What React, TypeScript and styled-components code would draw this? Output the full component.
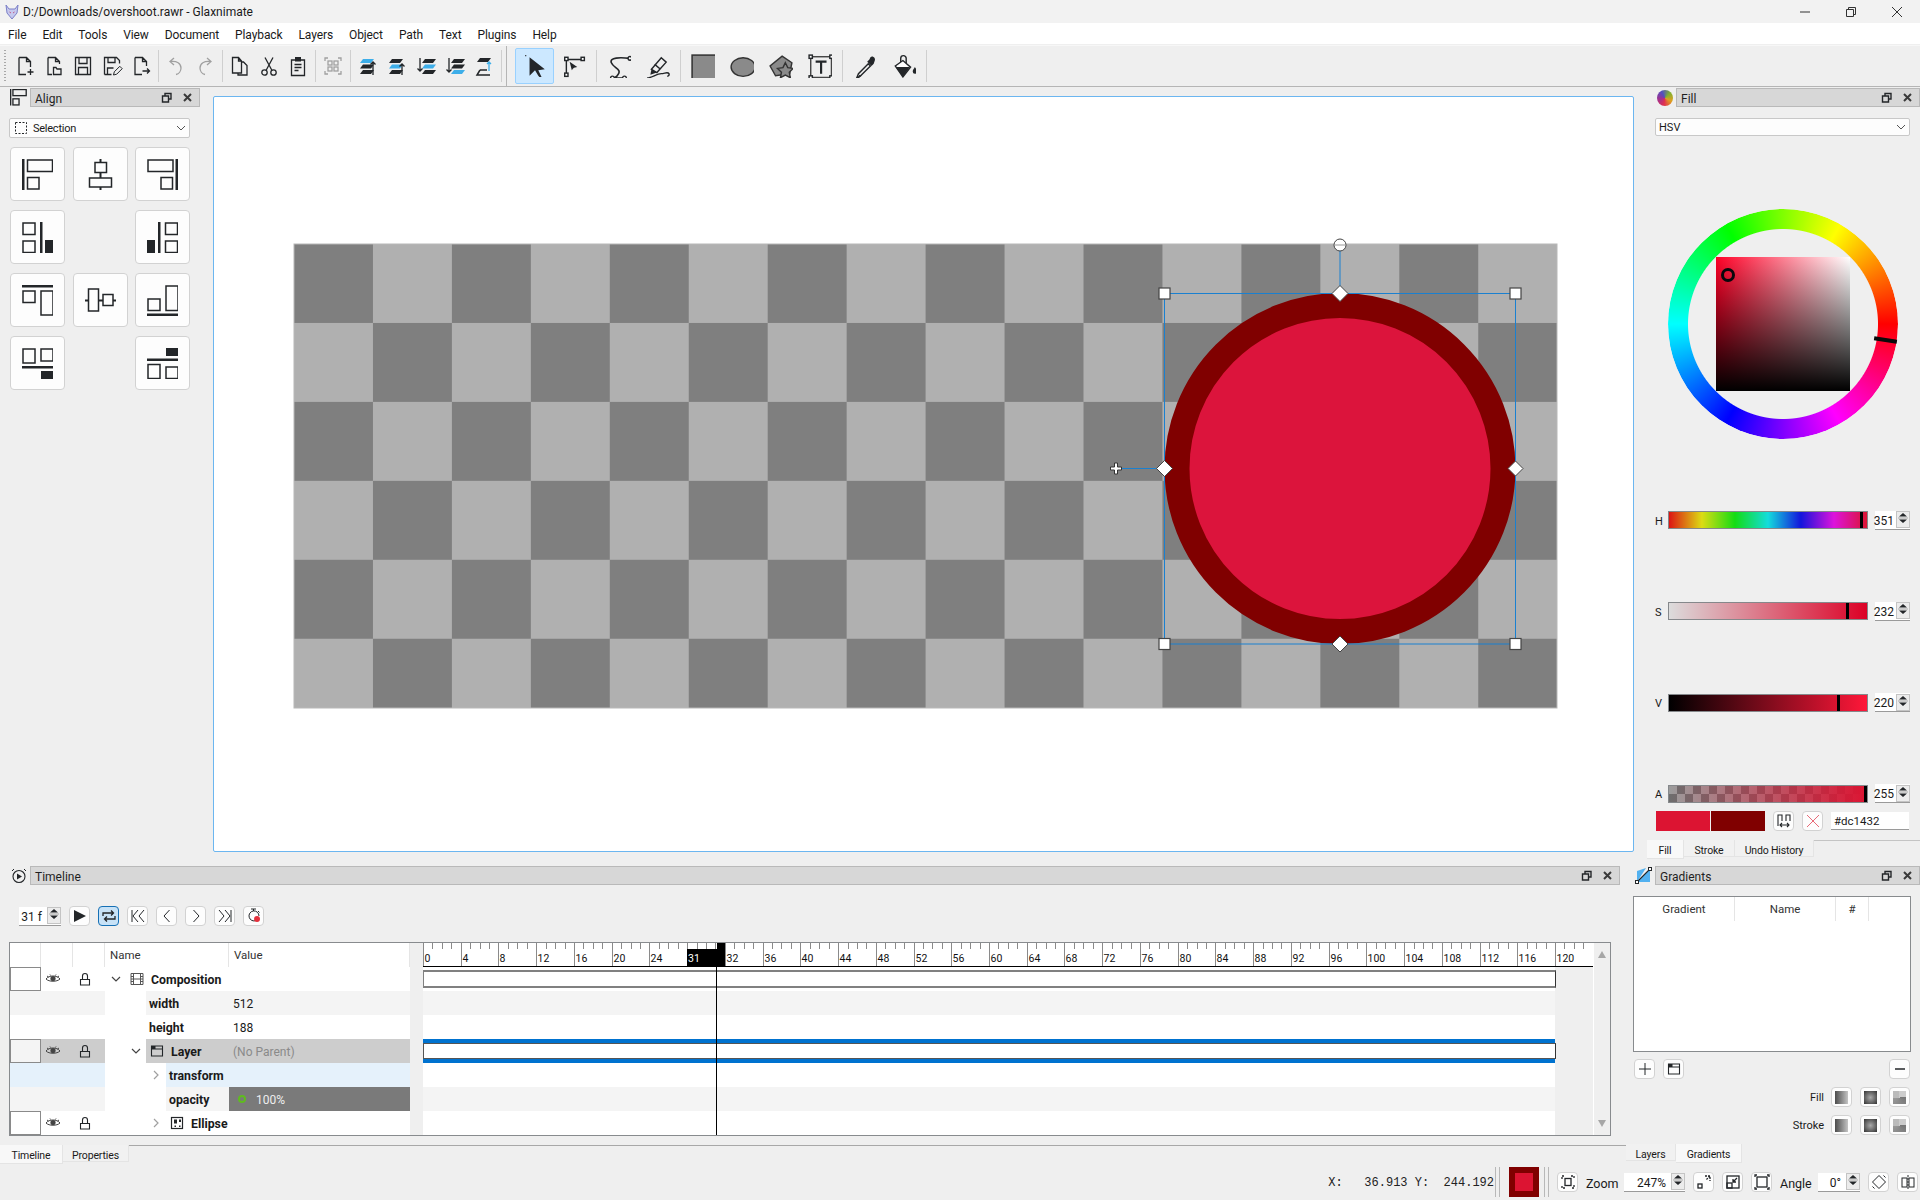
import React from "react";
import styled, { createGlobalStyle } from "styled-components";

const GlobalStyle = createGlobalStyle`
  html, body { margin: 0; padding: 0; background: #efefef; }
  body { font-family: Roboto, "Liberation Sans", sans-serif; font-size: 12px; color: #1a1a1a; }
`;

const Window = styled.div`
  width: 1920px;
  height: 1200px;
  display: flex;
  flex-direction: column;
  overflow: hidden;
  background: #efefef;
`;

/* title + menu */
const TitleBar = styled.div`
  height: 23px;
  background: #f2f2f2;
  display: flex;
  align-items: center;
  padding-left: 4px;
  font-size: 12px;
`;
const TitleText = styled.span`
  margin-left: 3px;
  flex: 1;
`;
const WindowButton = styled.div`
  width: 46px;
  height: 23px;
  display: flex;
  align-items: center;
  justify-content: center;
`;
const MenuBar = styled.div`
  height: 21px;
  background: #fff;
  display: flex;
  align-items: center;
  letter-spacing: -0.1px;
`;
const MenuItem = styled.span`
  padding: 2px 8px 0;
`;

/* toolbar */
const ToolStrip = styled.div`
  height: 40px;
  margin-top: 1px;
  background: #efefef;
  border-top: 1px solid #f7f7f7;
  border-bottom: 1px solid #b5b5b5;
  display: flex;
  align-items: center;
`;
const Grip = styled.div`
  width: 2px;
  height: 32px;
  margin: 0 4px;
  background: repeating-linear-gradient(to bottom, #a8a8a8 0 1px, transparent 1px 3px);
`;
const ToolGroup = styled.div<{ $w: number }>`
  width: ${(p) => p.$w}px;
  flex: none;
  display: flex;
  align-items: center;
  height: 100%;
`;
const ToolButton = styled.div<{ $w?: number; $on?: boolean }>`
  width: ${(p) => p.$w ?? 29}px;
  height: 36px;
  flex: none;
  box-sizing: border-box;
  display: flex;
  align-items: center;
  justify-content: center;
  border-radius: 2px;
  border: 1px solid ${(p) => (p.$on ? "#99d1ff" : "transparent")};
  background: ${(p) => (p.$on ? "#cce8ff" : "transparent")};
`;
const ToolSep = styled.div`
  width: 1px;
  height: 32px;
  margin: 0 2.5px;
  flex: none;
  background: #cfcfcf;
`;
const ToolbarDivider = styled.div`
  width: 1px;
  height: 40px;
  background: #b5b5b5;
`;

/* generic icon */
const IconSvg = styled.svg`
  display: block;
  flex: none;
  fill: none;
  stroke: #232629;
  stroke-width: 1.3;
`;
type IconProps = { s?: number; vb?: number; children: React.ReactNode };
const Icon = ({ s = 22, vb = 22, children }: IconProps) => (
  <IconSvg width={s} height={s} viewBox={`0 0 ${vb} ${vb}`}>
    {children}
  </IconSvg>
);
const Solid = styled.path<{ $c?: string }>`
  fill: ${(p) => p.$c ?? "#232629"};
  stroke: none;
`;
const Faded = styled.g`
  stroke: #a0a0a0;
`;

/* layout of the upper area */
const TopRow = styled.div`
  height: 773px;
  display: flex;
`;
const BottomRow = styled.div`
  height: 304px;
  display: flex;
`;
const AlignDock = styled.div`
  width: 213px;
  flex: none;
  box-sizing: border-box;
  padding: 1px 13px 0 10px;
`;
const DockHead = styled.div`
  height: 19px;
  display: flex;
  align-items: center;
  gap: 3px;
`;
const DockTitle = styled.div`
  flex: 1;
  height: 19px;
  box-sizing: border-box;
  background: #d7d7d7;
  border: 1px solid #b9b9b9;
  padding: 0 6px 0 4px;
  display: flex;
  align-items: center;
  justify-content: space-between;
  color: #1f1f1f;
`;
const DockLabel = styled.span`
  padding-top: 2px;
`;
const DockButtons = styled.div`
  display: flex;
  gap: 10px;
  align-items: center;
`;
const Combo = styled.div`
  height: 20px;
  box-sizing: border-box;
  background: #fdfdfd;
  border: 1px solid #c8c8c8;
  border-radius: 2px;
  display: flex;
  align-items: center;
  font-size: 11px;
  padding: 0 2px 0 4px;
  gap: 4px;
`;
const ComboText = styled.span`
  flex: 1;
`;
const AlignCombo = styled(Combo)`
  margin: 11px 10px 9px -1px;
  letter-spacing: -0.25px;
  gap: 5px;
`;
const AlignGrid = styled.div`
  display: grid;
  grid-template-columns: repeat(3, 55px);
  grid-auto-rows: 54px;
  column-gap: 7.5px;
  row-gap: 9px;
`;
const AlignButton = styled.div`
  box-sizing: border-box;
  border: 1px solid #d2d2d2;
  border-radius: 4px;
  background: #fdfdfd;
  display: flex;
  align-items: center;
  justify-content: center;
`;

/* canvas */
const CanvasFrame = styled.div`
  width: 1421px;
  height: 756px;
  margin-top: 9px;
  flex: none;
  box-sizing: border-box;
  background: #fff;
  border: 1px solid #6cb6f0;
  border-radius: 2px;
`;
const CanvasSvg = styled.svg`
  display: block;
`;

/* fill dock */
const FillDock = styled.div`
  flex: 1;
  box-sizing: border-box;
  padding-top: 1px;
  display: flex;
  flex-direction: column;
`;
const FillHead = styled(DockHead)`
  padding-left: 23px;
`;
const FillDisc = styled.div`
  width: 16px;
  height: 16px;
  border-radius: 50%;
  background: conic-gradient(from 45deg, #7fb030, #e0a020, #e03050, #a03090, #5050c0, #7fb030);
`;
const FillBody = styled.div`
  padding: 0 10px 0 21px;
  display: flex;
  flex-direction: column;
`;
const FillCombo = styled(Combo)`
  height: 18px;
  margin-top: 11px;
  padding-left: 3px;
`;
const WheelArea = styled.div`
  height: 375px;
  display: flex;
  align-items: center;
  justify-content: center;
`;
const Wheel = styled.div`
  width: 230px;
  height: 230px;
  position: relative;
  display: flex;
  align-items: center;
  justify-content: center;
`;
const WheelRing = styled.div`
  position: absolute;
  inset: 0;
  border-radius: 50%;
  background: conic-gradient(from 90deg, #f00, #f0f, #00f, #0ff, #0f0, #ff0, #f00);
  -webkit-mask: radial-gradient(circle, transparent 94.5px, #000 95.5px);
  mask: radial-gradient(circle, transparent 94.5px, #000 95.5px);
`;
const WheelSquare = styled.div`
  width: 134px;
  height: 134px;
  position: relative;
  background: linear-gradient(to top, #000, rgba(0, 0, 0, 0)), linear-gradient(to right, #ff0026, #fff);
`;
const SquareMarker = styled.div`
  position: absolute;
  left: 5px;
  top: 11px;
  width: 14px;
  height: 14px;
  box-sizing: border-box;
  border: 3px solid #08080c;
  border-radius: 50%;
`;
const HueMarker = styled.div`
  position: absolute;
  left: 206.5px;
  top: 129px;
  width: 23px;
  height: 4px;
  background: #0a0a0a;
  transform: rotate(9deg);
`;
const SliderStack = styled.div`
  height: 292px;
  display: flex;
  flex-direction: column;
  justify-content: space-between;
`;
const SliderRow = styled.div`
  height: 18px;
  display: flex;
  align-items: center;
`;
const SliderLabel = styled.span`
  width: 13px;
  padding-top: 2px;
  font-size: 11px;
`;
const SliderBar = styled.div<{ $bg: string }>`
  width: 200px;
  height: 18px;
  box-sizing: border-box;
  border: 1px solid #85888b;
  position: relative;
  background: ${(p) => p.$bg};
`;
const SliderThumb = styled.div<{ $at: number }>`
  position: absolute;
  top: 0;
  bottom: 0;
  left: ${(p) => p.$at}px;
  width: 3px;
  background: #000;
`;
const Spin = styled.div<{ $w: number }>`
  width: ${(p) => p.$w}px;
  height: 19px;
  box-sizing: border-box;
  flex: none;
  background: #fff;
  border-bottom: 1px solid #9a9a9a;
  display: flex;
  align-items: center;
  justify-content: flex-end;
  font-size: 12px;
`;
const SliderSpin = styled(Spin)`
  margin-left: 7px;
`;
const SpinValue = styled.span<{ $pad: number }>`
  flex: 1;
  text-align: right;
  padding: 2px ${(p) => p.$pad}px 0 0;
`;
const SpinArrows = styled.div`
  width: 14px;
  height: 17px;
  box-sizing: border-box;
  border: 1px solid #c4c4c4;
  background: #ececec;
  flex: none;
`;
const SwatchRow = styled.div`
  display: flex;
  align-items: center;
  height: 20px;
  margin: 8px 0 0 1px;
  gap: 8px;
`;
const SwatchPair = styled.div`
  display: flex;
  gap: 1px;
`;
const Swatch = styled.div<{ $c: string }>`
  width: 54px;
  height: 20px;
  background: ${(p) => p.$c};
`;
const SquareButton = styled.div<{ $on?: boolean }>`
  width: 21px;
  height: 20px;
  flex: none;
  box-sizing: border-box;
  border: 1px solid ${(p) => (p.$on ? "#1670b5" : "#d2d2d2")};
  border-radius: 4px;
  background: ${(p) => (p.$on ? "#c7e2f7" : "#fdfdfd")};
  display: flex;
  align-items: center;
  justify-content: center;
`;
const HexInput = styled.div`
  width: 78px;
  height: 18px;
  box-sizing: border-box;
  background: #fff;
  border-bottom: 1px solid #9a9a9a;
  padding-left: 3px;
  font-size: 11.5px;
  line-height: 19px;
`;
const TabStrip = styled.div<{ $line?: boolean }>`
  height: 19px;
  flex: none;
  display: flex;
  align-items: flex-start;
  border-top: ${(p) => (p.$line ? "1px solid #a8a8a8" : "1px solid transparent")};
`;
const FillTabs = styled(TabStrip)`
  margin: 9px 0 0 13px;
  border-top-color: #c4c4c4;
`;
const Tab = styled.div<{ $on?: boolean; $w: number }>`
  width: ${(p) => p.$w}px;
  height: ${(p) => (p.$on ? 19 : 17)}px;
  margin-top: -1px;
  flex: none;
  text-align: center;
  box-sizing: border-box;
  background: ${(p) => (p.$on ? "#f8f8f8" : "#f1f1f1")};
  border-right: 1px solid #e4e4e4;
  border-bottom: 1px solid #e4e4e4;
  font-size: 10.5px;
  letter-spacing: -0.15px;
  line-height: 21px;
`;

/* timeline */
const TimelineColumn = styled.div`
  width: 1626px;
  flex: none;
  display: flex;
  flex-direction: column;
`;
const TimelineHead = styled(DockHead)`
  margin: 6px 6px 0 11px;
`;
const TransportRow = styled.div`
  display: flex;
  align-items: center;
  gap: 8px;
  margin: 21px 0 16px 19px;
  height: 20px;
`;
const TimelineTable = styled.div`
  width: 1602px;
  height: 194px;
  margin: 0 0 9px 9px;
  box-sizing: border-box;
  border: 1px solid #888b8e;
  display: flex;
  background: #fff;
`;
const TreePane = styled.div`
  width: 400px;
  flex: none;
  background: #fff;
`;
const TreeHeader = styled.div`
  height: 24px;
  display: flex;
  color: #333;
`;
const HeaderCell = styled.div<{ $w: number }>`
  width: ${(p) => p.$w}px;
  box-sizing: border-box;
  padding-left: 5px;
  line-height: 24px;
  border-right: 1px solid #e5e5e5;
  font-size: 11.5px;
`;
const TreeRow = styled.div`
  height: 24px;
  display: flex;
`;
const Gutter = styled.div<{ $tone?: string }>`
  width: 95px;
  flex: none;
  display: flex;
  align-items: center;
  background: ${(p) => p.$tone ?? "#fff"};
`;
const ColourBox = styled.div<{ $tone?: string }>`
  width: 31px;
  height: 24px;
  box-sizing: border-box;
  border: 1px solid #8a8a8a;
  background: ${(p) => p.$tone ?? "#fff"};
`;
const GutterIcon = styled.div`
  width: 32px;
  box-sizing: border-box;
  padding-right: 9px;
  display: flex;
  justify-content: center;
`;
const Indent = styled.div<{ $w: number }>`
  width: ${(p) => p.$w}px;
  flex: none;
  display: flex;
  justify-content: flex-end;
  align-items: center;
`;
const ChevBox = styled.div`
  width: 20px;
  display: flex;
  justify-content: center;
`;
const NameCell = styled.div<{ $tone?: string }>`
  flex: 1;
  box-sizing: border-box;
  display: flex;
  align-items: center;
  gap: 6px;
  padding: 2px 0 0 3px;
  font-weight: 700;
  font-size: 12.3px;
  background: ${(p) => p.$tone ?? "#fff"};

  svg {
    margin-top: -2px;
  }
`;
const ValueCell = styled.div<{ $tone?: string; $ink?: string }>`
  width: 181px;
  flex: none;
  box-sizing: border-box;
  padding: 2px 0 0 4px;
  display: flex;
  align-items: center;
  background: ${(p) => p.$tone ?? "#fff"};
  color: ${(p) => p.$ink ?? "#1a1a1a"};
`;
const KeyDot = styled.div`
  width: 8px;
  height: 8px;
  box-sizing: border-box;
  border: 2px solid #5fbb1f;
  border-radius: 50%;
  margin: -2px 10px 0 5px;
`;
const Splitter = styled.div`
  width: 13px;
  flex: none;
  background: #efefef;
`;
const TrackPane = styled.div`
  width: 1170px;
  flex: none;
  position: relative;
  background: #efefef;
`;
const Ruler = styled.svg`
  display: block;
  background: #fff;
  stroke: #8a8a8a;
`;
const RulerLabel = styled.text<{ $ink?: string }>`
  font-family: Roboto, sans-serif;
  font-size: 10.5px;
  stroke: none;
  fill: ${(p) => p.$ink ?? "#111"};
`;
const Track = styled.div<{ $tone?: string }>`
  width: 1132px;
  height: 24px;
  box-sizing: border-box;
  background: ${(p) => p.$tone ?? "#fff"};
  display: flex;
  align-items: center;
`;
const Clip = styled.div<{ $edge: string; $h: number }>`
  width: 1133px;
  height: ${(p) => p.$h}px;
  flex: none;
  box-sizing: border-box;
  background: #fff;
  border: 1px solid ${(p) => p.$edge};
  border-top-width: ${(p) => (p.$h > 16 ? 2 : 1)}px;
  border-bottom-width: ${(p) => (p.$h > 16 ? 2 : 1)}px;
  border-right-color: #333;
`;
const Playhead = styled.div`
  position: absolute;
  left: 293px;
  top: 24px;
  bottom: 0;
  width: 1px;
  background: #000;
`;
const Scrollbar = styled.div`
  flex: 1;
  box-sizing: border-box;
  border-left: 1px solid #fff;
  background: #efefef;
  display: flex;
  flex-direction: column;
  justify-content: space-between;
  align-items: center;
  padding: 8px 0;
`;
const Arrow = styled.div<{ $up?: boolean }>`
  width: 0;
  height: 0;
  border-left: 4.5px solid transparent;
  border-right: 4.5px solid transparent;
  border-${(p) => (p.$up ? "bottom" : "top")}: 7px solid #a6a6a6;
`;

/* gradients */
const GradientColumn = styled.div`
  flex: 1;
  display: flex;
  flex-direction: column;
  padding-left: 7px;
`;
const GradientHead = styled(DockHead)`
  margin: 6px 0 0 2px;
`;
const GradientTable = styled.div`
  width: 278px;
  height: 156px;
  margin-top: 11px;
  box-sizing: border-box;
  background: #fff;
  border: 1px solid #888b8e;
`;
const GradientHeader = styled.div`
  display: flex;
  height: 24px;
  color: #333;
`;
const GradientCol = styled.div<{ $w: number }>`
  width: ${(p) => p.$w}px;
  text-align: center;
  line-height: 25px;
  border-right: 1px solid #e5e5e5;
  font-size: 11.5px;
`;
const GradientTools = styled.div`
  display: flex;
  width: 278px;
  gap: 8px;
  margin-top: 7px;
  padding: 0 1px;
  box-sizing: border-box;
`;
const Pusher = styled.div`
  flex: 1;
`;
const StyleRow = styled.div`
  width: 278px;
  display: flex;
  justify-content: flex-end;
  align-items: center;
  gap: 8px;
  margin-top: 8px;
  padding-right: 1px;
  box-sizing: border-box;
  font-size: 11px;
`;
const StyleLabel = styled.span`
  margin-right: -1px;
`;
const Sample = styled.div<{ $bg: string }>`
  width: 13px;
  height: 13px;
  background: ${(p) => p.$bg};
`;
const GradientTabs = styled(TabStrip)`
  margin: 9px 0 0 -7px;
`;

/* status */
const StatusBar = styled.div`
  flex: 1;
  display: flex;
  align-items: center;
  justify-content: flex-end;
  gap: 8px;
  padding-right: 2px;
`;
const Coords = styled.pre`
  margin: 2px -7px 0 0;
  font-family: "Liberation Mono", monospace;
  font-size: 12px;
  color: #222;
`;
const StatusGrip = styled.div`
  width: 5px;
  height: 30px;
  flex: none;
  box-sizing: border-box;
  border-left: 1px solid #b8b8b8;
  border-right: 1px solid #b8b8b8;
`;
const CurrentColour = styled.div`
  width: 30px;
  height: 30px;
  margin: 0 -3px 0 1px;
  background: #800000;
  display: flex;
  align-items: center;
  justify-content: center;
`;
const CurrentFill = styled.div`
  width: 18px;
  height: 18px;
  background: #dc1432;
`;
const StatusLabel = styled.span<{ $w: number }>`
  width: ${(p) => p.$w}px;
  padding-top: 2px;
  font-size: 12.5px;
`;

/* little drawings */
const ArrowPair = () => (
  <SpinArrows>
    <Icon s={12} vb={12}>
      <Solid d="M6 1l4 3.5H2zM2 7.5h8L6 11z" />
      <path d="M1 6h10" stroke="#aaa" strokeWidth="1" />
    </Icon>
  </SpinArrows>
);
const SpinBox = ({ w, value, pad = 5, as: Base = Spin }: { w: number; value: string; pad?: number; as?: typeof Spin }) => (
  <Base $w={w}>
    <SpinValue $pad={pad}>{value}</SpinValue>
    <ArrowPair />
  </Base>
);
const FloatGlyph = () => (
  <Icon s={11} vb={11}>
    <path d="M1.5 4h6v6h-6zM4 4V1.5h6v5.5H7.5" strokeWidth="1.4" />
  </Icon>
);
const CloseGlyph = () => (
  <Icon s={11} vb={11}>
    <path d="M2 2l7 7M9 2l-7 7" strokeWidth="2" stroke="#3a3a3a" />
  </Icon>
);
const DockTail = () => (
  <DockButtons>
    <FloatGlyph />
    <CloseGlyph />
  </DockButtons>
);
const Chev = ({ down, faded }: { down?: boolean; faded?: boolean }) => (
  <ChevBox>
    <Icon s={12} vb={12}>
      <path d={down ? "M2 4l4 4 4-4" : "M4 2l4 4-4 4"} stroke={faded ? "#a0a0a0" : "#444"} strokeWidth="1.2" />
    </Icon>
  </ChevBox>
);
const Eye = () => (
  <Icon s={16} vb={16}>
    <path d="M1 8c3-4 11-4 14 0-3 3-11 3-14 0z" strokeWidth="1" stroke="#444" />
    <circle cx="8" cy="7.5" r="2.6" fill="#444" stroke="none" />
    <path d="M2 5l1.5 1M14 5l-1.5 1M5 3.5l.6 1M11 3.5l-.6 1" strokeWidth="1" stroke="#444" />
  </Icon>
);
const Lock = () => (
  <Icon s={14} vb={14}>
    <path d="M2.5 7.5h9v5.5h-9zM4.5 7.5V4a2.5 2.5 0 0 1 5 0v3.5" strokeWidth="1.1" />
  </Icon>
);
const GutterFor = ({ tone, box }: { tone?: string; box?: string }) => (
  <Gutter $tone={tone}>
    <ColourBox $tone={box} />
    <GutterIcon>
      <Eye />
    </GutterIcon>
    <GutterIcon>
      <Lock />
    </GutterIcon>
  </Gutter>
);

const AlignIcons: React.ReactNode[] = [
  <>
    <Solid d="M0 0h2.5v31H0z" />
    <rect x="5.5" y="1" width="25" height="11.5" />
    <rect x="5.5" y="18.5" width="11.5" height="11.5" />
  </>,
  <>
    <Solid d="M14.5 0h2v31h-2z" />
    <rect x="10" y="3.5" width="11.5" height="10" fill="#fdfdfd" />
    <rect x="4.5" y="19" width="22" height="9" fill="#fdfdfd" />
  </>,
  <>
    <Solid d="M28.5 0H31v31h-2.5z" />
    <rect x="1" y="1" width="25" height="11.5" />
    <rect x="14" y="18.5" width="11.5" height="11.5" />
  </>,
  <>
    <rect x="1" y="1" width="12" height="11.5" />
    <rect x="1" y="19" width="12" height="11.5" />
    <Solid d="M18 0h2.5v31H18zM23 18h8v13h-8z" />
  </>,
  null,
  <>
    <Solid d="M0 18h8v13H0zM11 0h2.5v31H11z" />
    <rect x="18.5" y="1" width="12" height="11.5" />
    <rect x="18.5" y="19" width="12" height="11.5" />
  </>,
  <>
    <Solid d="M0 0h31v2.5H0z" />
    <rect x="1" y="6" width="12" height="11.5" />
    <rect x="19" y="6" width="12" height="24" />
  </>,
  <>
    <Solid d="M0 14.5h31v2H0z" />
    <rect x="3.5" y="4" width="10" height="22" fill="#fdfdfd" />
    <rect x="18" y="9.5" width="10" height="11" fill="#fdfdfd" />
  </>,
  <>
    <Solid d="M0 28.5h31V31H0z" />
    <rect x="1" y="14" width="12" height="11.5" />
    <rect x="19" y="1" width="12" height="24.5" />
  </>,
  <>
    <rect x="1" y="1" width="12" height="14" />
    <rect x="19" y="1" width="12" height="12" />
    <Solid d="M0 18h31v2.5H0zM19 23h12v8H19z" />
  </>,
  null,
  <>
    <Solid d="M19 0h12v8H19zM0 10.5h31V13H0z" />
    <rect x="1" y="16.5" width="12" height="14" />
    <rect x="19" y="19" width="12" height="11.5" />
  </>,
];

const layer = (y: number) => `M7 ${y}h11l-3 4H4z`;
const Blue = "#3daee9";
const StackIcon = ({ colours, arrow, left }: { colours: string[]; arrow: string; left?: boolean }) => (
  <Icon>
    {colours.map((c, i) => (
      <Solid key={i} $c={c} d={layer(4 + i * 5.5)} transform={left ? "translate(3 0)" : "translate(-1 0)"} />
    ))}
    <path d={arrow} strokeWidth="1.3" />
  </Icon>
);

const FileTools: React.ReactNode[] = [
  <Icon key="new">
    <path d="M5 2.5h7.5l4 4V12M5 2.5v17h7M12.5 2.5v4h4M16.5 14v6M13.5 17h6" />
  </Icon>,
  <Icon key="open">
    <path d="M5 2.5h7.5l4 4V9M5 2.5v17h4M12.5 2.5v4h4M10.5 12.5h2.5l1 1.5h4v5.5h-7.5z" />
  </Icon>,
  <Icon key="save">
    <path d="M3.5 2.5h15v17h-15zM7 2.5v6h8v-6M6.5 19.5v-7h9v7" />
  </Icon>,
  <Icon key="saveas">
    <path d="M3.5 19.5v-17h12l3 3v3M3.5 19.5h7M7 2.5v5h7v-5M6.5 19v-6h6" />
    <path d="M12.5 20l.8-3.2 5.5-5.5 2.4 2.4-5.5 5.5z" strokeWidth="1" />
  </Icon>,
  <Icon key="export">
    <path d="M5 2.5h7.5l4 4V11M5 2.5v17h7M12.5 2.5v4h4M12.5 16h7M17 13.5l2.5 2.5-2.5 2.5" />
  </Icon>,
];
const EditTools: React.ReactNode[] = [
  <Icon key="undo">
    <Faded>
      <path d="M9 3L5 6.5 9 10M5 6.5c7-1 11 2 11 6.5 0 3-2 6-5 6.5" />
    </Faded>
  </Icon>,
  <Icon key="redo">
    <Faded>
      <path d="M13 3l4 3.5L13 10M17 6.5c-7-1-11 2-11 6.5 0 3 2 6 5 6.5" />
    </Faded>
  </Icon>,
];
const ClipTools: React.ReactNode[] = [
  <Icon key="copy">
    <path d="M3.5 2.5h6l3 3.5v12h-9zM9.5 2.5V6h3M12.5 7h2l3.5 3.5v9.5h-9v-2" />
  </Icon>,
  <Icon key="cut">
    <circle cx="6.5" cy="17.5" r="2.7" />
    <circle cx="15.5" cy="17.5" r="2.7" />
    <path d="M8 15.5L15 2.5M14 15.5L7 2.5" />
  </Icon>,
  <Icon key="paste">
    <path d="M4.5 5h13v15.5h-13zM7.5 9.5h7M7.5 12.5h7M7.5 15.5h4" />
    <Solid d="M8 2h6v4.5H8z" />
  </Icon>,
];
const StackTools: React.ReactNode[] = [
  <StackIcon key="a" colours={[Blue, "#232629", "#232629"]} arrow="M16 20V7M13.5 9.5L16 7l2.5 2.5" />,
  <StackIcon key="b" colours={["#232629", Blue, "#232629"]} arrow="M16 20V9M13.5 11.5L16 9l2.5 2.5" />,
  <StackIcon key="c" left colours={["#232629", Blue, "#232629"]} arrow="M5 3v13M2.5 13.5L5 16l2.5-2.5" />,
  <StackIcon key="d" left colours={["#232629", "#232629", Blue]} arrow="M5 3v14M2.5 14.5L5 17l2.5-2.5" />,
  <Icon key="e">
    <Solid d={layer(3)} />
    <path d="M7 15h7M7 15l-3 5h13" strokeWidth="1.5" />
    <path d="M16 16V7M14 9l2-2 2 2" stroke={Blue} />
  </Icon>,
];

const ShapeTools: React.ReactNode[][] = [
  [
    <Icon key="sel" s={24}>
      <Solid d="M6 3l14 11-6 1 3 6h-2l-1-1-3-5-5 5z" />
      <Solid d="M2 1h1v1H2z" />
    </Icon>,
    <Icon key="node" s={24}>
      <path d="M4 5v14M4 5h14" />
      <rect x="2.5" y="3" width="3" height="3" fill="#fff" />
      <rect x="17.5" y="3" width="3" height="3" fill="#fff" />
      <rect x="2.5" y="17.5" width="3" height="3" fill="#fff" />
      <Solid d="M7 7l7 5-3 .5-1 1L9 15z" />
    </Icon>,
  ],
  [
    <Icon key="bez" s={24}>
      <path d="M21 4C12 3 2 3 4 8c2 5 10 6 6 11-1 2-3 3-5 3h11" strokeWidth="1.5" />
      <circle cx="21" cy="4" r="1.7" fill="#fff" />
      <circle cx="5" cy="22" r="1.7" fill="#fff" />
      <circle cx="16" cy="22" r="1.7" fill="#fff" />
    </Icon>,
    <Icon key="pen" s={24}>
      <path d="M5 14L14 3.5l4.5 4L10 17z" />
      <Solid d="M5 14l5 3-6 2z" />
      <path d="M8 9.5l5 4.2" />
      <path d="M1 22c4 0 9-4 13-4 3 0 6-2 7 0 .6 1.3-.5 2.5-1.5 2" />
    </Icon>,
  ],
  [
    <Icon key="rect" s={24}>
      <rect x="1" y="1" width="22" height="22" fill="#8a8a8a" stroke="#333" strokeWidth="1.4" />
    </Icon>,
    <Icon key="ell" s={24}>
      <ellipse cx="12" cy="12" rx="11" ry="8.5" fill="#8a8a8a" stroke="#333" />
    </Icon>,
    <Icon key="star" s={24}>
      <path d="M12 2l9 6-2 10-13 2-5-9z" fill="#8a8a8a" stroke="#333" />
      <path d="M15 8l2.2 4.5 5 .7-3.600 3.500.9 5-4.500-2.400-4.500 2.400.9-5L7.800 13.200l5-.7z" fill="#8a8a8a" stroke="#333" />
    </Icon>,
    <Icon key="text" s={24}>
      <rect x="2.5" y="2.5" width="19" height="19" stroke="#444" />
      <rect x="1" y="1" width="3" height="3" fill="#fff" />
      <rect x="20" y="1" width="3" height="3" fill="#fff" />
      <rect x="1" y="20" width="3" height="3" fill="#fff" />
      <rect x="20" y="20" width="3" height="3" fill="#fff" />
      <path d="M7 7h10M12 7v11" strokeWidth="2" />
    </Icon>,
  ],
  [
    <Icon key="pick" s={24}>
      <path d="M3 23l2-5 9-9 2 2-9 9z" />
      <Solid d="M13 7l4 4 2-2 1-3c1-2-2-5-4-3l-1 2z" />
      <Solid d="M3 23l3-4 2 1z" />
    </Icon>,
    <Icon key="fill" s={24}>
      <path d="M8 10V4a2.5 2.5 0 0 1 5 0v7" />
      <path d="M3 11l7-5 7 6-7 9z" fill="#fff" />
      <Solid d="M3.5 12h13l-6.5 9z" />
      <Solid d="M21 12c1.2 2 2 3 2 4a2 2 0 0 1-4 0c0-1 .8-2 2-4z" />
    </Icon>,
  ],
];

const TransportIcons: React.ReactNode[] = [
  <Icon s={14} vb={14} key="play">
    <Solid d="M1 1l12 6-12 6z" />
  </Icon>,
  <Icon s={16} vb={16} key="loop">
    <path d="M2 8V5h10M10 2.5L12.5 5 10 7.5M14 8v3H4M6 13.5L3.5 11 6 8.5" />
  </Icon>,
  <Icon s={14} vb={14} key="first">
    <path d="M1 1v12M7 1L2 7l5 6M13 1L8 7l5 6" strokeWidth="1" />
  </Icon>,
  <Icon s={14} vb={14} key="prev">
    <path d="M9.5 1L4 7l5.5 6" strokeWidth="1" />
  </Icon>,
  <Icon s={14} vb={14} key="next">
    <path d="M4.5 1L10 7l-5.5 6" strokeWidth="1" />
  </Icon>,
  <Icon s={14} vb={14} key="last">
    <path d="M13 1v12M7 1l5 6-5 6M1 1l5 6-5 6" strokeWidth="1" />
  </Icon>,
  <Icon s={16} vb={16} key="rec">
    <path d="M13 8a5 5 0 1 0-3 4.500M5 1h5M7.5 1v2M12 3l1.5 1.5" strokeWidth="1" />
    <circle cx="11" cy="11" r="3" fill="#e5303c" stroke="none" />
  </Icon>,
];

const StatusIcons: Record<string, React.ReactNode> = {
  select: (
    <Icon s={16} vb={16}>
      <rect x="5" y="4.5" width="6" height="7" />
      <path d="M2 5V2h3M11 2h3v3M14 11v3h-3M5 14H2v-3" strokeDasharray="2 1" />
    </Icon>
  ),
  fit: (
    <Icon s={16} vb={16}>
      <path d="M9 2h5v5M14 2l-4 4" strokeDasharray="2 1" />
      <rect x="2" y="10" width="4" height="4" />
    </Icon>
  ),
  shrink: (
    <Icon s={16} vb={16}>
      <rect x="2" y="2" width="12" height="12" />
      <rect x="2" y="9" width="5" height="5" />
      <path d="M12 4L8 8M8 5v3h3" />
    </Icon>
  ),
  frame: (
    <Icon s={16} vb={16}>
      <rect x="3" y="3" width="10" height="10" />
      <path d="M1 3V1h2M13 1h2v2M15 13v2h-2M3 15H1v-2" />
    </Icon>
  ),
  rotate: (
    <Icon s={16} vb={16}>
      <path d="M8 1.5L14.5 8 8 14.5 1.5 8zM12.5 1.5l2 2M1.500 12.500l2 2" strokeWidth="1" />
    </Icon>
  ),
  flip: (
    <Icon s={16} vb={16}>
      <rect x="2" y="4" width="5" height="9" strokeWidth="1" />
      <rect x="9" y="4" width="5" height="9" strokeWidth="1" />
      <path d="M8 1v14" strokeDasharray="2 1" strokeWidth="1" />
    </Icon>
  ),
};

const frames = Array.from({ length: 124 }, (_, i) => i);
const TimeRuler = () => (
  <Ruler width={1170} height={24}>
    {frames.map((f) => {
      const x = Math.round((f * 1132) / 120) + 0.5;
      return <path key={f} d={f % 4 === 0 ? `M${x} 0V24` : `M${x} 0V6`} />;
    })}
    {frames
      .filter((f) => f % 4 === 0 && f !== 28)
      .map((f) => (
        <RulerLabel key={f} x={Math.round((f * 1132) / 120) + 1.5} y={19}>
          {f}
        </RulerLabel>
      ))}
    <rect x="264" y="6" width="38" height="18" fill="#000" stroke="none" />
    <rect x="294" y="0" width="8" height="6" fill="#000" stroke="none" />
    <RulerLabel x={265} y={19} $ink="#fff">
      31
    </RulerLabel>
    <path d="M0 23.5H1170" stroke="#000" />
  </Ruler>
);

const Tx = 214;
const Ty = 97;
const CanvasDrawing = () => (
  <CanvasSvg width={1419} height={754}>
    <defs>
      <pattern id="check" patternUnits="userSpaceOnUse" width={157.9} height={157.9} x={294} y={244}>
        <rect width={157.9} height={157.9} fill="#b0b0b0" />
        <rect width={78.95} height={78.95} fill="#7f7f7f" />
        <rect x={78.95} y={78.95} width={78.95} height={78.95} fill="#7f7f7f" />
      </pattern>
    </defs>
    <g transform={`translate(${-Tx} ${-Ty})`}>
      <rect x={294} y={244} width={1263} height={464} fill="url(#check)" stroke="#b8b8b8" strokeWidth="1" />
      <circle cx={1340} cy={468.5} r={163} fill="#dc143c" stroke="#800000" strokeWidth={25} />
      <path d="M1164.5 293.5H1515.5V644H1164.5ZM1340 245V293M1116 468.5H1164" fill="none" stroke="#1a80d0" strokeWidth="1" />
      {[
        [1164.5, 293.5],
        [1515.5, 293.5],
        [1164.5, 644],
        [1515.5, 644],
      ].map(([x, y]) => (
        <rect key={`${x}${y}`} x={x - 5.5} y={y - 5.5} width={11} height={11} fill="#fff" stroke="#444" strokeWidth="1.2" />
      ))}
      {[
        [1340, 293.5, 8],
        [1340, 644, 8],
        [1164.5, 468.5, 8],
        [1515.5, 468.5, 7.5],
      ].map(([x, y, r]) => (
        <path
          key={`${x}${y}`}
          d={`M${x} ${y - r}l${r} ${r}-${r} ${r}-${r}-${r}z`}
          fill="#fff"
          stroke="#444"
          strokeWidth="1"
        />
      ))}
      <circle cx={1340} cy={245} r={6} fill="#fff" stroke="#444" strokeWidth="1" />
      <path d="M1334 245h12" stroke="#999" strokeWidth="1" />
      <path d="M1114.5 463h3v4h4v3h-4v4h-3v-4h-4v-3h4z" fill="#fff" stroke="#333" strokeWidth="1" />
    </g>
  </CanvasSvg>
);

const alphaBase =
  "linear-gradient(to right, rgba(220,20,50,0), #dc1432), repeating-conic-gradient(#6e6e6e 0 25%, #9c9c9c 0 50%) 0 0 / 16px 16px";
const sliders = [
  {
    label: "H",
    value: "351",
    thumb: 191,
    bg: "linear-gradient(to right, #dc1414, #dcdc14 16.6%, #14dc14 33.3%, #14dcdc 50%, #1414dc 66.6%, #dc14dc 83.3%, #dc1432)",
  },
  { label: "S", value: "232", thumb: 177, bg: "linear-gradient(to right, #dcdcdc, #dc0025)" },
  { label: "V", value: "220", thumb: 168, bg: "linear-gradient(to right, #000, #ff1739)" },
  { label: "A", value: "255", thumb: 195, bg: alphaBase },
];

const App = () => {
  return (
    <Window>
      <GlobalStyle />
      <TitleBar>
        <Icon s={16} vb={16}>
          <path d="M2 1l3 4h6l3-4-1 8-5 6-5-6z" fill="#c6c9ee" stroke="#7c80c8" strokeWidth="1" />
          <path d="M5.5 8l1.5 1M10.5 8L9 9" stroke="#c05a88" strokeWidth="1" />
        </Icon>
        <TitleText>D:/Downloads/overshoot.rawr - Glaxnimate</TitleText>
        <WindowButton>
          <Icon s={12} vb={12}>
            <path d="M1 6h10" stroke="#333" strokeWidth="1" />
          </Icon>
        </WindowButton>
        <WindowButton>
          <Icon s={12} vb={12}>
            <path d="M1.5 3.5h7v7h-7zM3.5 3.5v-2h7v7h-2" stroke="#333" strokeWidth="1" />
          </Icon>
        </WindowButton>
        <WindowButton>
          <Icon s={12} vb={12}>
            <path d="M1 1l10 10M11 1L1 11" stroke="#333" strokeWidth="1" />
          </Icon>
        </WindowButton>
      </TitleBar>
      <MenuBar>
        {["File", "Edit", "Tools", "View", "Document", "Playback", "Layers", "Object", "Path", "Text", "Plugins", "Help"].map((m) => (
          <MenuItem key={m}>{m}</MenuItem>
        ))}
      </MenuBar>
      <ToolStrip>
        <ToolGroup $w={506}>
          <Grip />
          {FileTools.map((t, i) => (
            <ToolButton key={i}>{t}</ToolButton>
          ))}
          <ToolSep />
          {EditTools.map((t, i) => (
            <ToolButton key={i}>{t}</ToolButton>
          ))}
          <ToolSep />
          {ClipTools.map((t, i) => (
            <ToolButton key={i}>{t}</ToolButton>
          ))}
          <ToolSep />
          <ToolButton>
            <Icon>
              <Faded>
                <rect x="6" y="6" width="4" height="4" />
                <rect x="12" y="6" width="4" height="4" />
                <rect x="6" y="12" width="4" height="4" />
                <rect x="12" y="12" width="4" height="4" />
                <path d="M3 6V3h3M16 3h3v3M19 16v3h-3M6 19H3v-3" />
              </Faded>
            </Icon>
          </ToolButton>
          <ToolSep />
          {StackTools.map((t, i) => (
            <ToolButton key={i}>{t}</ToolButton>
          ))}
          <ToolSep />
        </ToolGroup>
        <ToolbarDivider />
        <ToolGroup $w={420}>
          <Grip />
          {ShapeTools.map((group, g) => (
            <React.Fragment key={g}>
              {group.map((t, i) => (
                <ToolButton key={i} $w={39} $on={g === 0 && i === 0}>
                  {t}
                </ToolButton>
              ))}
              <ToolSep />
            </React.Fragment>
          ))}
        </ToolGroup>
      </ToolStrip>
      <TopRow>
        <AlignDock>
          <DockHead>
            <Icon s={17} vb={32}>
              <g strokeWidth="2.5">{AlignIcons[0]}</g>
            </Icon>
            <DockTitle>
              <DockLabel>Align</DockLabel>
              <DockTail />
            </DockTitle>
          </DockHead>
          <AlignCombo>
            <Icon s={14} vb={14}>
              <rect x="1.5" y="1.5" width="11" height="11" strokeDasharray="2 1.5" strokeWidth="1" />
            </Icon>
            <ComboText>Selection</ComboText>
            <Icon s={12} vb={12}>
              <path d="M2 4l4 4 4-4" stroke="#555" strokeWidth="1" />
            </Icon>
          </AlignCombo>
          <AlignGrid>
            {AlignIcons.map((ic, i) =>
              ic ? (
                <AlignButton key={i}>
                  <Icon s={31} vb={31}>
                    <g strokeWidth="1.5">{ic}</g>
                  </Icon>
                </AlignButton>
              ) : (
                <div key={i} />
              )
            )}
          </AlignGrid>
        </AlignDock>
        <CanvasFrame>
          <CanvasDrawing />
        </CanvasFrame>
        <FillDock>
          <FillHead>
            <FillDisc />
            <DockTitle>
              <DockLabel>Fill</DockLabel>
              <DockTail />
            </DockTitle>
          </FillHead>
          <FillBody>
            <FillCombo>
              <ComboText>HSV</ComboText>
              <Icon s={12} vb={12}>
                <path d="M2 4l4 4 4-4" stroke="#555" strokeWidth="1" />
              </Icon>
            </FillCombo>
            <WheelArea>
              <Wheel>
                <WheelRing />
                <WheelSquare>
                  <SquareMarker />
                </WheelSquare>
                <HueMarker />
              </Wheel>
            </WheelArea>
            <SliderStack>
              {sliders.map((s) => (
                <SliderRow key={s.label}>
                  <SliderLabel>{s.label}</SliderLabel>
                  <SliderBar $bg={s.bg}>
                    <SliderThumb $at={s.thumb} />
                  </SliderBar>
                  <SpinBox as={SliderSpin} w={35} pad={2} value={s.value} />
                </SliderRow>
              ))}
            </SliderStack>
            <SwatchRow>
              <SwatchPair>
                <Swatch $c="#dc1432" />
                <Swatch $c="#800000" />
              </SwatchPair>
              <SquareButton>
                <Icon s={16} vb={16}>
                  <path d="M2 13V2h4v6M10 8V2h4v6M4 12h9M11 10l2 2-2 2M6 14l-2-2 2-2" strokeWidth="1.1" />
                </Icon>
              </SquareButton>
              <SquareButton>
                <Icon s={16} vb={16}>
                  <path d="M2 2l12 12M14 2L2 14" stroke="#e86a78" strokeWidth="1" />
                </Icon>
              </SquareButton>
              <HexInput>#dc1432</HexInput>
            </SwatchRow>
          </FillBody>
          <FillTabs>
            <Tab $on $w={37}>Fill</Tab>
            <Tab $w={51}>Stroke</Tab>
            <Tab $w={79}>Undo History</Tab>
          </FillTabs>
        </FillDock>
      </TopRow>
      <BottomRow>
        <TimelineColumn>
          <TimelineHead>
            <Icon s={16} vb={16}>
              <circle cx="8" cy="8.5" r="6" strokeWidth="1.1" />
              <Solid d="M6 5.5l5 3-5 3z" />
              <path d="M1 3l2-2M15 3l-2-2" strokeWidth="1" />
            </Icon>
            <DockTitle>
              <DockLabel>Timeline</DockLabel>
              <DockTail />
            </DockTitle>
          </TimelineHead>
          <TransportRow>
            <SpinBox w={42} value="31 f" />
            {TransportIcons.map((ic, i) => (
              <SquareButton key={i} $on={i === 1}>
                {ic}
              </SquareButton>
            ))}
          </TransportRow>
          <TimelineTable>
            <TreePane>
              <TreeHeader>
                <HeaderCell $w={31} />
                <HeaderCell $w={32} />
                <HeaderCell $w={32} />
                <HeaderCell $w={124}>Name</HeaderCell>
                <HeaderCell $w={181}>Value</HeaderCell>
              </TreeHeader>
              <TreeRow>
                <GutterFor />
                <Indent $w={21}>
                  <Chev down />
                </Indent>
                <NameCell>
                  <Icon s={16} vb={16}>
                    <path d="M2 2.5h12v11H2zM4.5 2.5v11M11.5 2.5v11M4.5 8h7M2 5.5h2.5M2 8h2.5M2 10.5h2.5M11.5 5.5H14M11.5 8H14M11.5 10.5H14" stroke="#555" strokeWidth="1" />
                  </Icon>
                  Composition
                </NameCell>
                <ValueCell />
              </TreeRow>
              <TreeRow>
                <Gutter $tone="#f4f4f4" />
                <Indent $w={41} />
                <NameCell $tone="#f4f4f4">width</NameCell>
                <ValueCell $tone="#f4f4f4">512</ValueCell>
              </TreeRow>
              <TreeRow>
                <Gutter />
                <Indent $w={41} />
                <NameCell>height</NameCell>
                <ValueCell>188</ValueCell>
              </TreeRow>
              <TreeRow>
                <GutterFor tone="#cdcdcd" box="#f4f4f4" />
                <Indent $w={41}>
                  <Chev down />
                </Indent>
                <NameCell $tone="#cdcdcd">
                  <Icon s={16} vb={16}>
                    <path d="M2.5 3h11v10h-11zM2.5 6h11" strokeWidth="1.1" />
                    <Solid d="M2.5 3h4v3h-4z" />
                  </Icon>
                  Layer
                </NameCell>
                <ValueCell $tone="#cdcdcd" $ink="#8a8a8a">(No Parent)</ValueCell>
              </TreeRow>
              <TreeRow>
                <Gutter $tone="#e5f1fb" />
                <Indent $w={61}>
                  <Chev faded />
                </Indent>
                <NameCell $tone="#e5f1fb">transform</NameCell>
                <ValueCell $tone="#e5f1fb" />
              </TreeRow>
              <TreeRow>
                <Gutter $tone="#f4f4f4" />
                <Indent $w={61} />
                <NameCell $tone="#f4f4f4">opacity</NameCell>
                <ValueCell $tone="#7a7a7a" $ink="#eeeeee">
                  <KeyDot />
                  100%
                </ValueCell>
              </TreeRow>
              <TreeRow>
                <GutterFor />
                <Indent $w={61}>
                  <Chev faded />
                </Indent>
                <NameCell>
                  <Icon s={16} vb={16}>
                    <rect x="2.5" y="2.5" width="11" height="11" strokeWidth="1.2" />
                    <Solid d="M5 4.5h3v4H5zM10 4.5h2V7h-2zM5.5 10.5H7V12H5.500zM10 10.5h1.500V12H10z" />
                  </Icon>
                  Ellipse
                </NameCell>
                <ValueCell />
              </TreeRow>
            </TreePane>
            <Splitter />
            <TrackPane>
              <TimeRuler />
              <Track>
                <Clip $edge="#808080" $h={18} />
              </Track>
              <Track $tone="#f4f4f4" />
              <Track />
              <Track $tone="#0072cf">
                <Clip $edge="#555" $h={16} />
              </Track>
              <Track />
              <Track $tone="#f4f4f4" />
              <Track />
              <Playhead />
            </TrackPane>
            <Scrollbar>
              <Arrow $up />
              <Arrow />
            </Scrollbar>
          </TimelineTable>
          <TabStrip $line>
            <Tab $on $w={63}>Timeline</Tab>
            <Tab $w={66}>Properties</Tab>
          </TabStrip>
        </TimelineColumn>
        <GradientColumn>
          <GradientHead>
            <Icon s={17} vb={17}>
              <Solid $c="#52b1f0" d="M2 15L15 2v13z" />
              <Solid $c="#52b1f0" d="M2 15L2 4l9-3z" />
              <path d="M2 15L15 2" strokeWidth="1.1" />
              <rect x="0.5" y="13.5" width="3" height="3" fill="#fff" strokeWidth="1" />
              <rect x="13.5" y="0.5" width="3" height="3" fill="#fff" strokeWidth="1" />
            </Icon>
            <DockTitle>
              <DockLabel>Gradients</DockLabel>
              <DockTail />
            </DockTitle>
          </GradientHead>
          <GradientTable>
            <GradientHeader>
              <GradientCol $w={100}>Gradient</GradientCol>
              <GradientCol $w={100}>Name</GradientCol>
              <GradientCol $w={32}>#</GradientCol>
            </GradientHeader>
          </GradientTable>
          <GradientTools>
            <SquareButton>
              <Icon s={14} vb={14}>
                <path d="M7 1v12M1 7h12" strokeWidth="1" />
              </Icon>
            </SquareButton>
            <SquareButton>
              <Icon s={16} vb={16}>
                <path d="M2.5 3h11v10h-11zM2.5 6h11" strokeWidth="1.1" />
                <Solid d="M2.5 3h4v3h-4z" />
              </Icon>
            </SquareButton>
            <Pusher />
            <SquareButton>
              <Icon s={14} vb={14}>
                <path d="M2 7h10" strokeWidth="1.5" />
              </Icon>
            </SquareButton>
          </GradientTools>
          {["Fill", "Stroke"].map((label) => (
            <StyleRow key={label}>
              <StyleLabel>{label}</StyleLabel>
              <SquareButton>
                <Sample $bg="linear-gradient(to right, #4c4c4c, #c4c4c4)" />
              </SquareButton>
              <SquareButton>
                <Sample $bg="radial-gradient(circle, #aaa, #333)" />
              </SquareButton>
              <SquareButton>
                <Sample $bg="conic-gradient(from 0deg, #ccc 25%, #777 25%, #999 75%, #bbb 75%)" />
              </SquareButton>
            </StyleRow>
          ))}
          <GradientTabs>
            <Tab $w={50}>Layers</Tab>
            <Tab $on $w={66}>Gradients</Tab>
          </GradientTabs>
        </GradientColumn>
      </BottomRow>
      <StatusBar>
        <Coords>{"X:   36.913 Y:  244.192"}</Coords>
        <StatusGrip />
        <CurrentColour>
          <CurrentFill />
        </CurrentColour>
        <StatusGrip />
        <SquareButton>{StatusIcons.select}</SquareButton>
        <StatusLabel $w={30}>Zoom</StatusLabel>
        <SpinBox w={61} value="247%" />
        <SquareButton>{StatusIcons.fit}</SquareButton>
        <SquareButton>{StatusIcons.shrink}</SquareButton>
        <SquareButton>{StatusIcons.frame}</SquareButton>
        <StatusLabel $w={30}>Angle</StatusLabel>
        <SpinBox w={42} value="0°" />
        <SquareButton>{StatusIcons.rotate}</SquareButton>
        <SquareButton>{StatusIcons.flip}</SquareButton>
      </StatusBar>
    </Window>
  );
};

export default App;
